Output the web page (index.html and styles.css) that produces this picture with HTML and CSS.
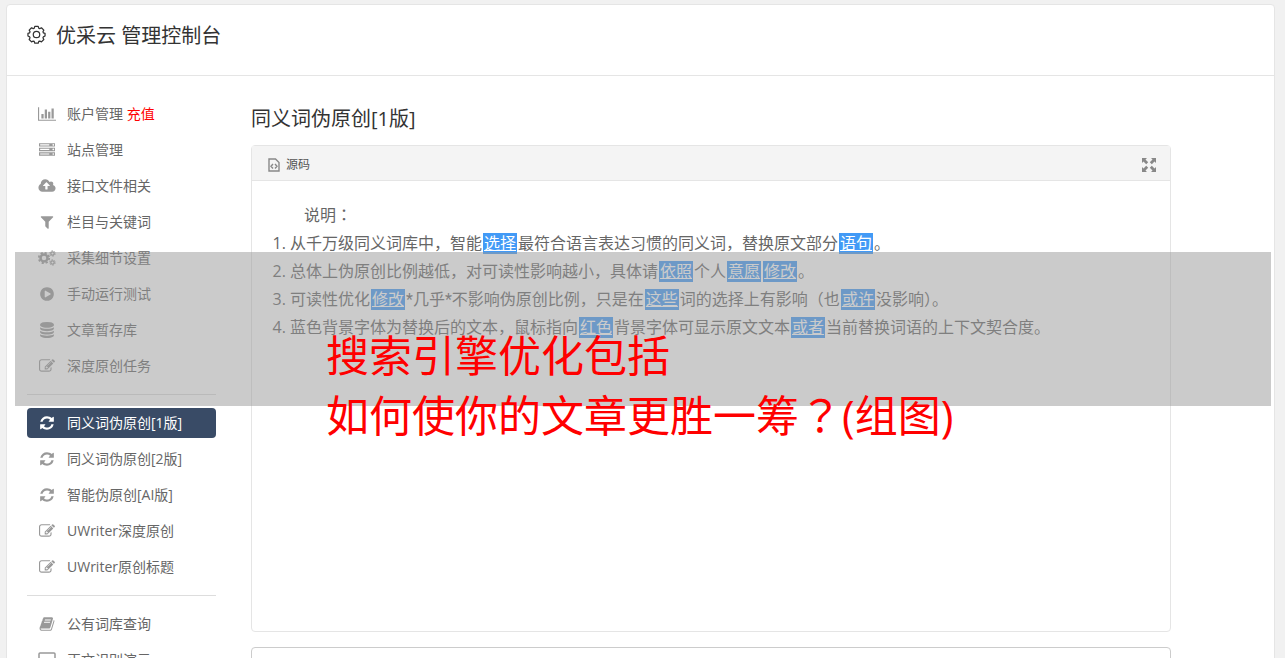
FILE: index.html
```html
<!DOCTYPE html>
<html lang="zh-CN">
<head>
<meta charset="utf-8">
<title>优采云 管理控制台</title>
<link rel="stylesheet" href="styles.css">
</head>
<body>
<svg class="sprite" aria-hidden="true">
  <symbol id="i-chart" viewBox="0 0 2048 1792"><path d="M640 896v512h-256v-512h256zm384-512v1024h-256v-1024h256zm1024 1152v128h-2048v-1536h128v1408h1920zm-640-896v768h-256v-768h256zm384-384v1152h-256v-1152h256z"/></symbol>
  <symbol id="i-server" viewBox="0 0 1792 1792"><path d="M128 1408h1024v-128h-1024v128zm0-512h1024v-128h-1024v128zm1568 448q0-40-28-68t-68-28-68 28-28 68 28 68 68 28 68-28 28-68zm-1568-960h1024v-128h-1024v128zm1568 448q0-40-28-68t-68-28-68 28-28 68 28 68 68 28 68-28 28-68zm0-512q0-40-28-68t-68-28-68 28-28 68 28 68 68 28 68-28 28-68zm96 832v384h-1792v-384h1792zm0-512v384h-1792v-384h1792zm0-512v384h-1792v-384h1792z"/></symbol>
  <symbol id="i-upload" viewBox="0 0 1920 1792"><path d="M1280 864q0-14-9-23l-352-352q-9-9-23-9t-23 9l-351 351q-10 12-10 24 0 14 9 23t23 9h224v352q0 13 9.500 22.500t22.500 9.500h192q13 0 22.500-9.500t9.500-22.500v-352h224q13 0 22.500-9.500t9.500-22.500zm640 288q0 159-112.500 271.500t-271.500 112.500h-1088q-185 0-316.500-131.500t-131.500-316.500q0-130 70-240t188-165q-2-30-2-43 0-212 150-362t362-150q156 0 285.500 87t188.500 231q71-62 166-62 106 0 181 75t75 181q0 76-41 138 130 31 213.500 135.500t83.500 238.500z"/></symbol>
  <symbol id="i-filter" viewBox="0 0 1792 1792"><path d="M1595 295q17 41-14 70l-493 493v742q0 42-39 59-13 5-25 5-27 0-45-19l-256-256q-19-19-19-45v-486l-493-493q-31-29-14-70 17-39 59-39h1280q42 0 59 39z"/></symbol>
  <symbol id="i-cogs" viewBox="0 0 18 16"><g fill="none" stroke="currentColor"><circle cx="6" cy="8" r="3.500" stroke-width="2.500"/><circle cx="6" cy="8" r="5.200" stroke-width="1.800" stroke-dasharray="2.200 1.884"/><circle cx="14.500" cy="3.500" r="1.700" stroke-width="1.300"/><circle cx="14.500" cy="3.500" r="2.700" stroke-width="1" stroke-dasharray="1.500 1.327"/><circle cx="14.500" cy="12.500" r="1.700" stroke-width="1.300"/><circle cx="14.500" cy="12.500" r="2.700" stroke-width="1" stroke-dasharray="1.500 1.327"/></g></symbol>
  <symbol id="i-play" viewBox="0 0 1792 1792"><path d="M896 128q209 0 385.500 103t279.500 279.500 103 385.500-103 385.500-279.500 279.500-385.500 103-385.500-103-279.500-279.500-103-385.500 103-385.500 279.500-279.500 385.500-103zm384 823q32-18 32-55t-32-55l-544-320q-31-19-64-1-32 19-32 56v640q0 37 32 56 16 8 32 8 17 0 32-9z"/></symbol>
  <symbol id="i-db" viewBox="0 0 1792 1792"><path d="M896 768q237 0 443-43t325-127v170q0 69-103 128t-280 93.500-385 34.500-385-34.500-280-93.500-103-128v-170q119 84 325 127t443 43zm0 768q237 0 443-43t325-127v170q0 69-103 128t-280 93.500-385 34.500-385-34.500-280-93.500-103-128v-170q119 84 325 127t443 43zm0-384q237 0 443-43t325-127v170q0 69-103 128t-280 93.500-385 34.500-385-34.500-280-93.500-103-128v-170q119 84 325 127t443 43zm0-1152q208 0 385 34.500t280 93.500 103 128v128q0 69-103 128t-280 93.500-385 34.500-385-34.500-280-93.500-103-128v-128q0-69 103-128t280-93.500 385-34.500z"/></symbol>
  <symbol id="i-edit" viewBox="0 0 1792 1792"><path d="M888 1184l116-116-152-152-116 116v56h96v96h56zm440-720q-16-16-33 1l-350 350q-17 17-1 33t33-1l350-350q17-17 1-33zm80 594v190q0 119-84.500 203.500t-203.500 84.500h-832q-119 0-203.500-84.500t-84.500-203.500v-832q0-119 84.500-203.500t203.500-84.500h832q63 0 117 25 15 7 18 23 3 17-9 29l-49 49q-14 14-32 8-23-6-45-6h-832q-66 0-113 47t-47 113v832q0 66 47 113t113 47h832q66 0 113-47t47-113v-126q0-13 9-22l64-64q15-15 35-7t20 29zm-96-738l288 288-672 672h-288v-288zm444 132l-92 92-288-288 92-92q28-28 68-28t68 28l152 152q28 28 28 68t-28 68z"/></symbol>
  <symbol id="i-refresh" viewBox="0 0 1792 1792"><path d="M1639 1056q0 5-1 7-64 268-268 434.500t-478 166.500q-146 0-282.500-55t-243.500-157l-129 129q-19 19-45 19t-45-19-19-45v-448q0-26 19-45t45-19h448q26 0 45 19t19 45-19 45l-137 137q71 66 161 102t187 36q134 0 250-65t186-179q11-17 53-117 8-23 30-23h192q13 0 22.500 9.500t9.500 22.500zm25-800v448q0 26-19 45t-45 19h-448q-26 0-45-19t-19-45 19-45l138-138q-148-137-349-137-134 0-250 65t-186 179q-11 17-53 117-8 23-30 23h-199q-13 0-22.500-9.500t-9.500-22.500v-7q65-268 270-434.500t480-166.500q146 0 284 55.500t245 156.500l130-129q19-19 45-19t45 19 19 45z"/></symbol>
  <symbol id="i-book" viewBox="0 0 1792 1792"><path d="M1703 478q40 57 18 129l-275 906q-19 64-76.500 107.500t-122.500 43.500h-923q-77 0-148.500-53.500t-99.500-131.500q-24-67-2-127 0-4 3-27t4-37q1-8-3-21.500t-3-19.500q2-11 8-21t16.500-23.500 16.500-23.500q23-38 45-91.500t30-91.500q3-10 .5-30t-.5-28q3-11 17-28t17-23q21-36 42-92t25-90q1-9-2.500-32t.5-28q4-13 22-30.500t22-22.500q19-26 42.500-84.500t27.500-96.500q1-8-3-25.500t-2-26.500q2-8 9-18t18-23 17-21q8-12 16.500-30.500t15-35 16-36 19.500-32 26.500-23.500 36-11.500 47.500 5.500l-1 3q38-9 51-9h761q74 0 114 56t18 130l-274 906q-36 119-71.500 153.500t-128.500 34.500h-869q-27 0-38 15-11 16-1 43 24 70 144 70h923q29 0 56-15.500t35-41.500l300-987q7-22 5-57 38 15 59 43zm-1064 2q-4 13 2 22.500t20 9.500h608q13 0 25.500-9.500t16.500-22.500l21-64q4-13-2-22.500t-20-9.500h-608q-13 0-25.500 9.500t-16.500 22.500zm-83 256q-4 13 2 22.500t20 9.500h608q13 0 25.500-9.500t16.500-22.500l21-64q4-13-2-22.500t-20-9.500h-608q-13 0-25.500 9.500t-16.500 22.500z"/></symbol>
  <symbol id="i-screen" viewBox="0 0 18 16"><path fill="none" stroke="currentColor" stroke-width="1.500" d="M2 1h14q1 0 1 1v9q0 1-1 1H2q-1 0-1-1V2q0-1 1-1zM9 12v3M5 15h8"/></symbol>
  <symbol id="i-gear" viewBox="0 0 20 20"><g fill="none" stroke="currentColor" stroke-width="1.300" stroke-linejoin="round"><path d="M8.200 1.500h3.600l.6 1.900 1 .4 1.800-.9 2.500 2.500-.9 1.800.4 1 1.800.6v2.800l-1.800.9-.4 1 .9 1.800-2.500 2.500-1.800-.9-1 .4-.6 1.900H8.200l-.6-1.900-1-.4-1.800.9-2.500-2.500.9-1.800-.4-1L1 11.600V8.800l1.800-.6.4-1-.9-1.800 2.500-2.500 1.800.9 1-.4z"/><circle cx="10" cy="10" r="3.400"/></g></symbol>
  <symbol id="i-code" viewBox="0 0 12 14"><path fill="none" stroke="currentColor" stroke-width="1.400" d="M1 1h6.500L11 4.500V13H1zM5 6L3 8.300l2 2.200M7 6l2 2.300-2 2.200"/></symbol>
  <symbol id="i-expand" viewBox="0 0 14 14"><path d="M0 0h5L3.500 1.500l2.700 2.700-2 2-2.700-2.700L0 5zM14 0v5l-1.500-1.500-2.700 2.700-2-2 2.700-2.700L9 0zM0 14V9l1.500 1.500 2.700-2.700 2 2-2.700 2.700L5 14zM14 14H9l1.500-1.500-2.700-2.700 2-2 2.700 2.700L14 9z"/></symbol>
</svg>
<div class="console">
  <header class="topbar">
    <svg class="gear"><use href="#i-gear"/></svg>
    <h1 class="title">优采云 管理控制台</h1>
  </header>
  <div class="layout">
    <nav class="menu">
      <a class="item" href="#"><svg class="icon"><use href="#i-chart"/></svg><span>账户管理 <em class="pay">充值</em></span></a>
      <a class="item" href="#"><svg class="icon"><use href="#i-server"/></svg>站点管理</a>
      <a class="item" href="#"><svg class="icon"><use href="#i-upload"/></svg>接口文件相关</a>
      <a class="item" href="#"><svg class="icon"><use href="#i-filter"/></svg>栏目与关键词</a>
      <a class="item" href="#"><svg class="icon"><use href="#i-cogs"/></svg>采集细节设置</a>
      <a class="item" href="#"><svg class="icon"><use href="#i-play"/></svg>手动运行测试</a>
      <a class="item" href="#"><svg class="icon"><use href="#i-db"/></svg>文章暂存库</a>
      <a class="item" href="#"><svg class="icon"><use href="#i-edit"/></svg>深度原创任务</a>
      <hr class="rule">
      <a class="item active" href="#"><svg class="icon"><use href="#i-refresh"/></svg>同义词伪原创[1版]</a>
      <a class="item" href="#"><svg class="icon"><use href="#i-refresh"/></svg>同义词伪原创[2版]</a>
      <a class="item" href="#"><svg class="icon"><use href="#i-refresh"/></svg>智能伪原创[AI版]</a>
      <a class="item" href="#"><svg class="icon"><use href="#i-edit"/></svg>UWriter深度原创</a>
      <a class="item" href="#"><svg class="icon"><use href="#i-edit"/></svg>UWriter原创标题</a>
      <hr class="rule">
      <a class="item" href="#"><svg class="icon"><use href="#i-book"/></svg>公有词库查询</a>
      <a class="item" href="#"><svg class="icon"><use href="#i-screen"/></svg>正文识别演示</a>
    </nav>
    <main class="main">
      <h2 class="heading">同义词伪原创[1版]</h2>
      <section class="editor">
        <div class="toolbar">
          <button class="tool" type="button"><svg class="code"><use href="#i-code"/></svg>源码</button>
          <button class="tool" type="button" aria-label="全屏"><svg class="expand"><use href="#i-expand"/></svg></button>
        </div>
        <div class="content">
          <p class="lead">说明<span class="mid" lang="zh-TW">：</span></p>
          <ol class="notes">
            <li>从千万级同义词库中，智能<mark>选择</mark>最符合语言表达习惯的同义词，替换原文部分<mark>语句</mark>。</li>
            <li>总体上伪原创比例越低，对可读性影响越小，具体请<mark>依照</mark>个人<mark>意愿</mark><mark>修改</mark>。</li>
            <li>可读性优化<mark>修改</mark><span class="starred">*几乎*</span>不影响伪原创比例，只是在<mark>这些</mark>词的选择上有影响（也<mark>或许</mark>没影响<span class="mid" lang="zh-TW">）</span>。</li>
            <li>蓝色背景字体为替换后的文本，鼠标指向<mark>红色</mark>背景字体可显示原文文本<mark>或者</mark>当前替换词语的上下文契合度。</li>
          </ol>
        </div>
      </section>
      <textarea class="source" aria-label="原文"></textarea>
    </main>
  </div>
</div>
<div class="banner">
  <p class="caption">搜索引擎优化包括<br>如何使你的文章更胜一筹<span class="mid" lang="zh-TW">？</span>(组图)</p>
</div>
</body>
</html>
```
FILE: styles.css
```css
* { box-sizing: border-box; }
body {
  margin: 0;
  height: 100vh;
  overflow: hidden;
  position: relative;
  padding: 4px 10px 0 6px;
  background: #f1f1f1;
  color: #666;
  font: 14px/30px "Open Sans", "Noto Sans CJK SC", sans-serif;
}
.sprite { display: none; }
svg { fill: currentColor; flex: none; }
.mid { font-family: "Noto Sans CJK TC", sans-serif; line-height: 1; }
.starred { font-family: Roboto, "Noto Sans CJK SC", sans-serif; line-height: 1; }
.console {
  min-height: 100vh;
  background: #fff;
  border: 1px solid #e5e5e5;
  border-radius: 4px 4px 0 0;
}
.topbar {
  display: flex;
  align-items: flex-start;
  gap: 10px;
  height: 71px;
  padding: 16px 20px;
  border-bottom: 1px solid #e5e5e5;
  color: #333;
}
.gear { width: 19px; height: 19px; margin-top: 4px; }
.title, .heading {
  margin: 0;
  color: #333;
  font-size: 20px;
  line-height: 30px;
  font-weight: 400;
}
.layout {
  display: flex;
  gap: 35px;
  padding: 23px 103px 0 20px;
}
.menu {
  flex: none;
  width: 189px;
  display: flex;
  flex-direction: column;
  gap: 6px;
}
.item {
  display: flex;
  align-items: center;
  gap: 11px;
  height: 30px;
  padding-left: 11px;
  border-radius: 4px;
  color: #666;
  text-decoration: none;
  white-space: nowrap;
}
.icon { width: 18px; height: 16px; color: #999; }
.pay { color: #f00; font-style: normal; }
.active { background: #394b66; color: #fff; }
.active .icon { color: #fff; }
.rule {
  width: 100%;
  margin: 7px 0;
  border: 0;
  border-top: 1px solid #ddd;
}
.main { flex: 1; min-width: 0; padding-top: 5px; }
.heading { margin-bottom: 11px; }
.editor {
  min-height: 487px;
  border: 1px solid #e5e5e5;
  border-radius: 4px;
}
.toolbar {
  display: flex;
  justify-content: space-between;
  align-items: center;
  height: 35px;
  padding: 3px 14px 0 16px;
  background: #f4f4f4;
  border-bottom: 1px solid #e5e5e5;
}
.tool {
  display: flex;
  align-items: center;
  gap: 6px;
  padding: 0;
  border: 0;
  background: none;
  color: #555;
  font: inherit;
  font-size: 12px;
}
.code { width: 12px; height: 14px; color: #888; }
.expand { width: 14px; height: 14px; color: #888; }
.content { padding: 20px; font-size: 16px; line-height: 28px; }
.lead { margin: 0; text-indent: 2em; }
.notes { margin: 0; padding-left: 18px; }
mark {
  margin: 0 1px;
  padding: 0 1px;
  background: linear-gradient(#429af6, #429af6) center / 100% 21px no-repeat;
  color: #fff;
  text-decoration: underline;
}
.source {
  display: block;
  width: 100%;
  height: 120px;
  margin-top: 15px;
  border: 1px solid #ccc;
  border-radius: 4px;
  resize: none;
}
.banner {
  position: absolute;
  top: 252px;
  left: 15px;
  right: 14px;
  height: 154px;
  padding: 74px 0 0 311px;
  background: rgba(151, 151, 151, 0.5);
}
.caption {
  margin: 0;
  color: #f00;
  font-size: 43px;
  line-height: 60px;
  white-space: nowrap;
}
```
